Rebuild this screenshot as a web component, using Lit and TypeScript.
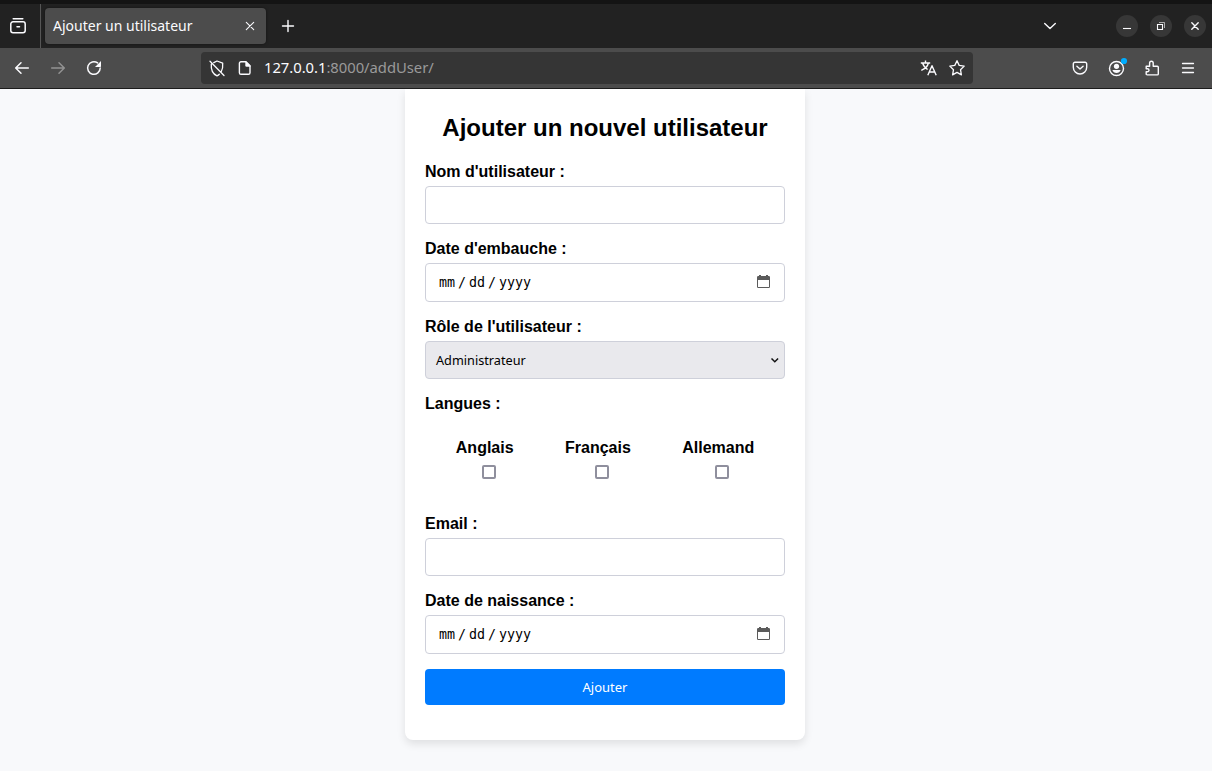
import { LitElement, html, css, svg } from "lit";
import { customElement, property } from "lit/decorators.js";

const icon = (w: number, h: number, body: unknown) =>
  html`<svg width=${w} height=${h} viewBox="0 0 ${w} ${h}" fill="none" stroke="currentColor"
    stroke-width="1.5" stroke-linecap="round" stroke-linejoin="round">${body}</svg>`;

@customElement("browser-chrome")
class BrowserChrome extends LitElement {
  static styles = css`
    :host { display: block; color: #fbfbfe; font-family: "Noto Sans", "Open Sans", sans-serif; }
    svg { display: block; flex: none; }
    .tabs { box-sizing: border-box; height: 48px; background: #222; border-top: 4px solid #141414; display: flex; align-items: center; }
    .view { width: 41px; height: 44px; display: flex; align-items: center; padding-left: 9px; box-sizing: border-box; border-right: 1px solid #565656; }
    .tab { box-sizing: border-box; margin-left: 4px; width: 221px; height: 36px; border-radius: 4px; background: #4c4c4c; box-shadow: 0 0 3px rgba(0,0,0,.5); display: flex; align-items: center; justify-content: space-between; padding: 0 11px 0 8px; font-size: 14px; }
    .label { white-space: nowrap; line-height: 20px; }
    .plus { margin-left: 14.5px; }
    .list { margin-left: auto; margin-right: 59px; }
    .win { width: 22px; height: 22px; border-radius: 50%; background: #373737; display: grid; place-items: center; margin-right: 12px; }
    .win.last { margin-right: 6px; }
    .bar { box-sizing: border-box; height: 41px; background: #4c4c4c; border-bottom: 1px solid #1c1c1c; display: flex; align-items: center; padding: 0 16px 0 14px; }
    .nav { display: flex; gap: 20px; width: 187px; }
    .dim { color: #929292; }
    .url { box-sizing: border-box; width: 772px; height: 32px; border-radius: 4px; background: #353535; display: flex; align-items: center; padding: 0 7px 0 8px; font-size: 14.8px; }
    .doc { margin-left: 11px; }
    .address { margin-left: 12px; flex: 1; color: #9a9a9a; line-height: 20px; padding-bottom: 2px; letter-spacing: -0.03px; }
    .host { color: #fbfbfe; }
    .star { margin-left: 11px; }
    .tools { margin-left: auto; display: flex; align-items: center; }
    .account { margin-left: 20px; }
    .addons { margin-left: 16px; }
    .menu { margin-left: 20px; }
  `;
  render() {
    return html`
      <div class="tabs">
        <div class="view">${icon(18, 18, svg`<path d="M4.200 1.800h9.600M4 4.800h10a2.200 2.200 0 0 1 2.200 2.200v6.500a2.200 2.200 0 0 1-2.200 2.200H4a2.200 2.200 0 0 1-2.200-2.200V7A2.200 2.200 0 0 1 4 4.800zM8 9.700h2.500"/>`)}</div>
        <div class="tab"><span class="label">Ajouter un utilisateur</span>
          ${icon(10, 10, svg`<path stroke-width="1.1" d="M1.300 1.300l7.400 7.400M8.700 1.300L1.300 8.700"/>`)}</div>
        <div class="plus">${icon(14, 14, svg`<path stroke-width="1.400" d="M7 1.500v11M1.500 7h11"/>`)}</div>
        <div class="list">${icon(14, 10, svg`<path stroke-width="1.400" d="M1.700 2.500L7 7.500l5.300-5"/>`)}</div>
        <div class="win">${icon(10, 10, svg`<path stroke-width="1.100" stroke-linecap="butt" d="M1 7.500h8"/>`)}</div>
        <div class="win">${icon(10, 10, svg`<g stroke-linejoin="miter" stroke-linecap="butt"><path stroke-width="1.100" d="M1.500 3.500h5v5h-5z"/><path stroke-width="1" opacity=".6" d="M3 1.500h5.500V7"/></g>`)}</div>
        <div class="win last">${icon(10, 10, svg`<path stroke-width="1.400" d="M1.800 1.800l6.400 6.400M8.200 1.800L1.800 8.200"/>`)}</div>
      </div>
      <div class="bar">
        <div class="nav">
          ${icon(16, 16, svg`<path d="M14.300 8H1.800M7 2.800L1.700 8 7 13.200"/>`)}
          <span class="dim">${icon(16, 16, svg`<path d="M1.700 8h12.500M9 2.800L14.300 8 9 13.200"/>`)}</span>
          ${icon(16, 16, svg`<path d="M14.200 8A6.300 6.300 0 1 1 11.600 2.900"/><path fill="currentColor" stroke="none" d="M15 1v5.300a.6.6 0 0 1-.6.6H9z"/>`)}
        </div>
        <div class="url">
          ${icon(17, 17, svg`<g stroke-width="1.300"><path d="M1 1.200l14 14.300M4.800 2.600L8 1l5.700 2.100c.3 3.400-.1 6.200-1.500 8.700M2.300 4.200c-.4 4.700 1.100 9.500 5.700 11.600 1-.5 1.700-1 2.300-1.600"/></g>`)}
          <span class="doc">${icon(15, 16, svg`<path stroke-width="1.400" d="M4 1.700h5L13 5.700v7a1.600 1.600 0 0 1-1.600 1.600H4a1.600 1.600 0 0 1-1.600-1.600V3.300A1.600 1.600 0 0 1 4 1.700z"/><path fill="currentColor" stroke="none" d="M8.300 1.500h1L13.500 5.700v1H9.500a1.200 1.200 0 0 1-1.200-1.200z"/>`)}</span>
          <span class="address"><span class="host">127.0.0.1</span>:8000/addUser/</span>
          ${icon(17, 16, svg`<path stroke-width="1.400" stroke-linecap="butt" d="M.8 3h9.400M5.500.6V3M2.600 3c.8 3 3 5.200 5 6.500M8.400 3C7.600 6.500 4.500 9 1.300 10.300M7.800 15.200L12 5.700l4.200 9.500M9.300 12h5.400"/>`)}
          <span class="star">${icon(18, 18, svg`<path stroke-width="1.300" d="M9 1.700l2.200 4.700 5 .7-3.700 3.600.9 5.200L9 13.400l-4.400 2.500.9-5.200L1.800 7.100l5-.7z"/>`)}</span>
        </div>
        <div class="tools">
          ${icon(16, 16, svg`<path stroke-width="1.400" d="M3 2.200h10a1.700 1.700 0 0 1 1.700 1.700V7.300a6.700 6.700 0 0 1-13.400 0V3.900A1.700 1.700 0 0 1 3 2.200zM4.900 6.200L8 9l3.100-2.800"/>`)}
          <span class="account">${icon(20, 22, svg`<circle cx="8.500" cy="11.500" r="7" stroke-width="1.400"/><circle cx="8.500" cy="9.300" r="2.600" fill="currentColor" stroke="none"/><path d="M4.400 13h8.200c-.5 2-2.200 3-4.100 3s-3.600-1-4.100-3z" fill="currentColor" stroke="none"/><circle cx="16" cy="4" r="3.100" fill="#00adff" stroke="none"/>`)}</span>
          <span class="addons">${icon(16, 18, svg`<path stroke-width="1.400" d="M2.200 7.200H5.600V4a1.800 1.800 0 0 1 3.600 0v3.200h4.100a1 1 0 0 1 1 1v6.700a1 1 0 0 1-1 1H3.200a1 1 0 0 1-1-1v-2.200h1.300a1.500 1.500 0 0 0 0-3H2.200z"/>`)}</span>
          <span class="menu">${icon(16, 16, svg`<path stroke-width="1.300" d="M2.500 3.500h11M2.500 8h11M2.500 12.500h11"/>`)}</span>
        </div>
      </div>`;
  }
}

@customElement("form-field")
class FormField extends LitElement {
  @property() label = "";
  @property() kind = "text";
  static styles = css`
    :host { display: block; margin-bottom: 15px; }
    .label { height: 19px; line-height: 19px; margin-bottom: 5px; font-weight: 700; }
    .box { box-sizing: border-box; height: 38px; border: 1px solid #ced0da; border-radius: 4px; background: #fff; display: flex; align-items: center; justify-content: space-between; }
    .date { height: 39px; padding: 0 14px 0 13px; }
    .parts { display: flex; gap: 3px; font: 13.333px/16px "DejaVu Sans Mono", monospace; letter-spacing: -0.03px; }
    .select { background: #e9e9ed; padding: 0 5px 0 10px; font: 12.7px/18px "Noto Sans", sans-serif; }
    svg { display: block; }
    .date svg { margin-bottom: 1px; }
  `;
  control() {
    if (this.kind === "date")
      return html`<div class="box date"><div class="parts"><span>mm</span><span>/</span><span>dd</span><span>/</span><span>yyyy</span></div>
        <svg width="13" height="14" viewBox="0 0 13 14"><path fill="#5b5b5b" fill-rule="evenodd" d="M2 0h2v1h5V0h2v1h.8A1.200 1.200 0 0 1 13 2.200v9.600A1.200 1.200 0 0 1 11.800 13H1.200A1.200 1.200 0 0 1 0 11.800V2.200A1.200 1.200 0 0 1 1.200 1H2zM1 5v7h11V5z"/></svg></div>`;
    if (this.kind === "select")
      return html`<div class="box select"><span>Administrateur</span>
        <svg width="9" height="6" viewBox="0 0 9 6"><path fill="none" stroke="#111" stroke-width="1.500" d="M1.500 1.500l3.300 3.200L8.100 1.500"/></svg></div>`;
    return html`<div class="box"></div>`;
  }
  render() {
    return html`<div class="label">${this.label}</div>${this.control()}`;
  }
}

@customElement("app-root")
class AppRoot extends LitElement {
  static styles = css`
    :host { display: flex; flex-direction: column; height: 771px; overflow: hidden; background: #f8f9fb; color: #000; font: 16px "Liberation Sans", Arial, sans-serif; }
    .page { flex: 1; min-height: 0; overflow: hidden; padding-left: 405px; }
    .card { box-sizing: border-box; width: 400px; height: 651px; padding: 25px 20px 0; background: #fff; border-radius: 0 0 8px 8px; box-shadow: 0 4px 8px rgba(0,0,0,.1); }
    .title { margin: 0 0 20px; font-size: 24px; line-height: 28px; text-align: center; white-space: nowrap; }
    .langs-label { height: 19px; line-height: 19px; font-weight: 700; margin-bottom: 25px; }
    .langs { display: flex; justify-content: center; gap: 51.4px; height: 76px; font-weight: 700; }
    .lang { display: flex; flex-direction: column; align-items: center; gap: 8px; line-height: 19px; }
    .check { box-sizing: border-box; width: 14px; height: 14px; margin-left: 8px; border: 2px solid #8f8f9d; border-radius: 2px; background: #fff; }
    .submit { display: block; width: 100%; height: 36px; border: 0; border-radius: 4px; padding: 0; background: #007bff; color: #fff; font: 13px/18px "Noto Sans", sans-serif; }
  `;
  render() {
    return html`
      <browser-chrome></browser-chrome>
      <main class="page">
        <section class="card">
          <h2 class="title">Ajouter un nouvel utilisateur</h2>
          <form-field label="Nom d'utilisateur :"></form-field>
          <form-field label="Date d'embauche :" kind="date"></form-field>
          <form-field label="Rôle de l'utilisateur :" kind="select"></form-field>
          <div class="langs-label">Langues :</div>
          <div class="langs">
            ${["Anglais", "Français", "Allemand"].map(
              (name) => html`<div class="lang"><span>${name}</span><span class="check"></span></div>`
            )}
          </div>
          <form-field label="Email :"></form-field>
          <form-field label="Date de naissance :" kind="date"></form-field>
          <button class="submit">Ajouter</button>
        </section>
      </main>`;
  }
}
